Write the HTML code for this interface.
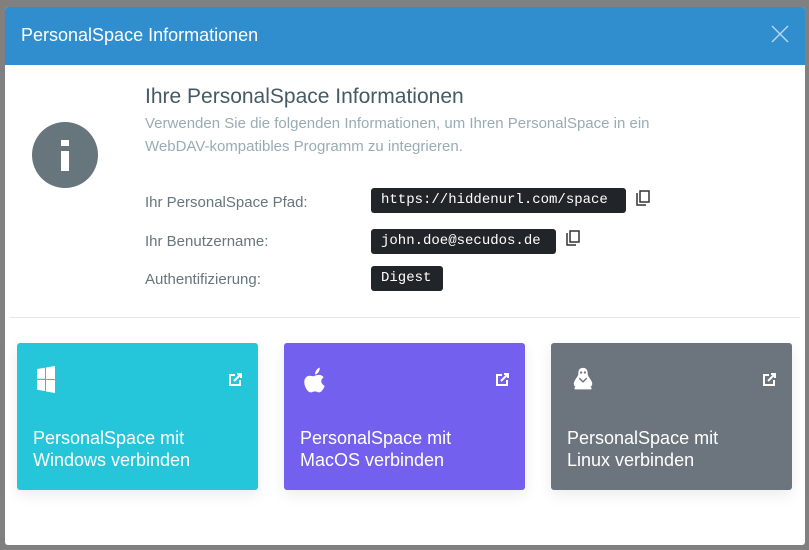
<!DOCTYPE html>
<html><head><style>
*{margin:0;padding:0;box-sizing:border-box}
body{width:809px;height:550px;background:#808080;font-family:"Liberation Sans",sans-serif;position:relative;overflow:hidden}
.modal{position:absolute;left:5px;top:7px;width:800px;height:538px;background:#fff;border-radius:3px;overflow:hidden}
.hd{height:58px;background:#308ecf;color:#fff;font-size:18px;padding:18px 0 0 16px}
.x{position:absolute;right:14px;top:16px;width:22px;height:22px}
.circ{position:absolute;left:27px;top:115px;width:66px;height:66px;border-radius:50%;background:#67757c}
.t{position:absolute;left:140px;top:78px;font-size:21px;color:#455a64}
.s{position:absolute;left:140px;top:105px;font-size:15px;line-height:23px;color:#99abb4;width:610px}
.lab{position:absolute;left:140px;font-size:15px;color:#67757c}
.code{position:absolute;left:366px;background:#212529;color:#fff;font-family:"Liberation Mono",monospace;font-size:14px;height:25px;line-height:25px;padding:0 10px;border-radius:3px}
.cp{position:absolute;width:14px;height:17px}
.sep{position:absolute;left:5px;right:5px;top:310px;border-top:1px solid #e5e5e5}
.card{position:absolute;top:336px;height:147px;width:241px;border-radius:3px;color:#fff;box-shadow:0 5px 15px rgba(0,0,0,.08)}
.card .txt{position:absolute;left:16px;top:84px;font-size:18px;line-height:22px}
.card .ext{position:absolute;right:16px;top:30px}
.card .ic{position:absolute;left:20px;top:22px}
</style></head><body>
<div class="modal">
<div class="hd">PersonalSpace Informationen</div>
<svg class="x" viewBox="0 0 22 22"><path d="M3 3L19 19M19 3L3 19" stroke="#bcd7ee" stroke-width="1.4"/></svg>
<div class="circ"><div style="position:absolute;left:29px;top:18px;width:8px;height:6px;background:#fff"></div><div style="position:absolute;left:29px;top:29px;width:8px;height:20px;background:#fff"></div></div>
<div class="t">Ihre PersonalSpace Informationen</div>
<div class="s">Verwenden Sie die folgenden Informationen, um Ihren PersonalSpace in ein<br>WebDAV-kompatibles Programm zu integrieren.</div>
<div class="lab" style="top:187px">Ihr PersonalSpace Pfad:</div>
<div class="lab" style="top:226px">Ihr Benutzername:</div>
<div class="lab" style="top:264px">Authentifizierung:</div>
<div class="code" style="top:181px;width:255px">https://hiddenurl.com/space</div>
<div class="code" style="top:222px;width:185px">john.doe@secudos.de</div>
<div class="code" style="top:259px;width:72px">Digest</div>
<svg class="cp" style="left:631px;top:183px" viewBox="0 0 14 17"><path d="M1 3v12h9" fill="none" stroke="#333" stroke-width="1.5"/><rect x="4" y="1" width="9" height="11" fill="none" stroke="#333" stroke-width="1.5"/></svg>
<svg class="cp" style="left:561px;top:223px" viewBox="0 0 14 17"><path d="M1 3v12h9" fill="none" stroke="#333" stroke-width="1.5"/><rect x="4" y="1" width="9" height="11" fill="none" stroke="#333" stroke-width="1.5"/></svg>
<div class="sep"></div>
<div class="card" style="left:12px;background:#26c6da">
<svg class="ic" width="18" height="29" viewBox="0 0 18 29"><path d="M0 4l8-1.3v11H0zM9 2.5L18 1v13H9zM0 15h8v11L0 24.7zM9 15h9v13l-9-1.5z" fill="#fff"/></svg>
<svg class="ext" width="13" height="13" viewBox="0 0 13 13"><path d="M6 2H1v10h10V7" fill="none" stroke="#fff" stroke-width="2"/><path d="M5 8L12 1M8 1h4v4" fill="none" stroke="#fff" stroke-width="2"/></svg>
<div class="txt">PersonalSpace mit<br>Windows verbinden</div></div>
<div class="card" style="left:279px;background:#7460ee">
<svg class="ic" width="22" height="30" viewBox="0 0 20 28"><path d="M10 10c2-1 6-1.5 8 1.5-3 2-3 6 1 8-1 3-3 6-5 6-1.5 0-2-.8-4-.8s-2.5.8-4 .8C3 25.5 0 20 0 16c0-4 2.5-6 5-6 2 0 3.5 1 5 0zM10 9c0-3 2-6 4.5-6.5 0 3.5-2 6-4.5 6.5z" fill="#fff"/></svg>
<svg class="ext" width="13" height="13" viewBox="0 0 13 13"><path d="M6 2H1v10h10V7" fill="none" stroke="#fff" stroke-width="2"/><path d="M5 8L12 1M8 1h4v4" fill="none" stroke="#fff" stroke-width="2"/></svg>
<div class="txt">PersonalSpace mit<br>MacOS verbinden</div></div>
<div class="card" style="left:546px;background:#6c757d">
<svg class="ic" width="24" height="30" viewBox="0 0 24 32"><path d="M12 3c4 0 5 3 5 6 0 3 2 4 4 8 2 4 0 6-1 6 1 1 2 3 0 3H4c-2 0-1-2 0-3-1 0-3-2-1-6 2-4 4-5 4-8 0-3 1-6 5-6z" fill="#fff"/><circle cx="10" cy="8" r="1.2" fill="#6c757d"/><circle cx="14" cy="8" r="1.2" fill="#6c757d"/><path d="M8 14l4 4 4-4" fill="none" stroke="#6c757d" stroke-width="1.5"/></svg>
<svg class="ext" width="13" height="13" viewBox="0 0 13 13"><path d="M6 2H1v10h10V7" fill="none" stroke="#fff" stroke-width="2"/><path d="M5 8L12 1M8 1h4v4" fill="none" stroke="#fff" stroke-width="2"/></svg>
<div class="txt">PersonalSpace mit<br>Linux verbinden</div></div>
</div>
</body></html>
